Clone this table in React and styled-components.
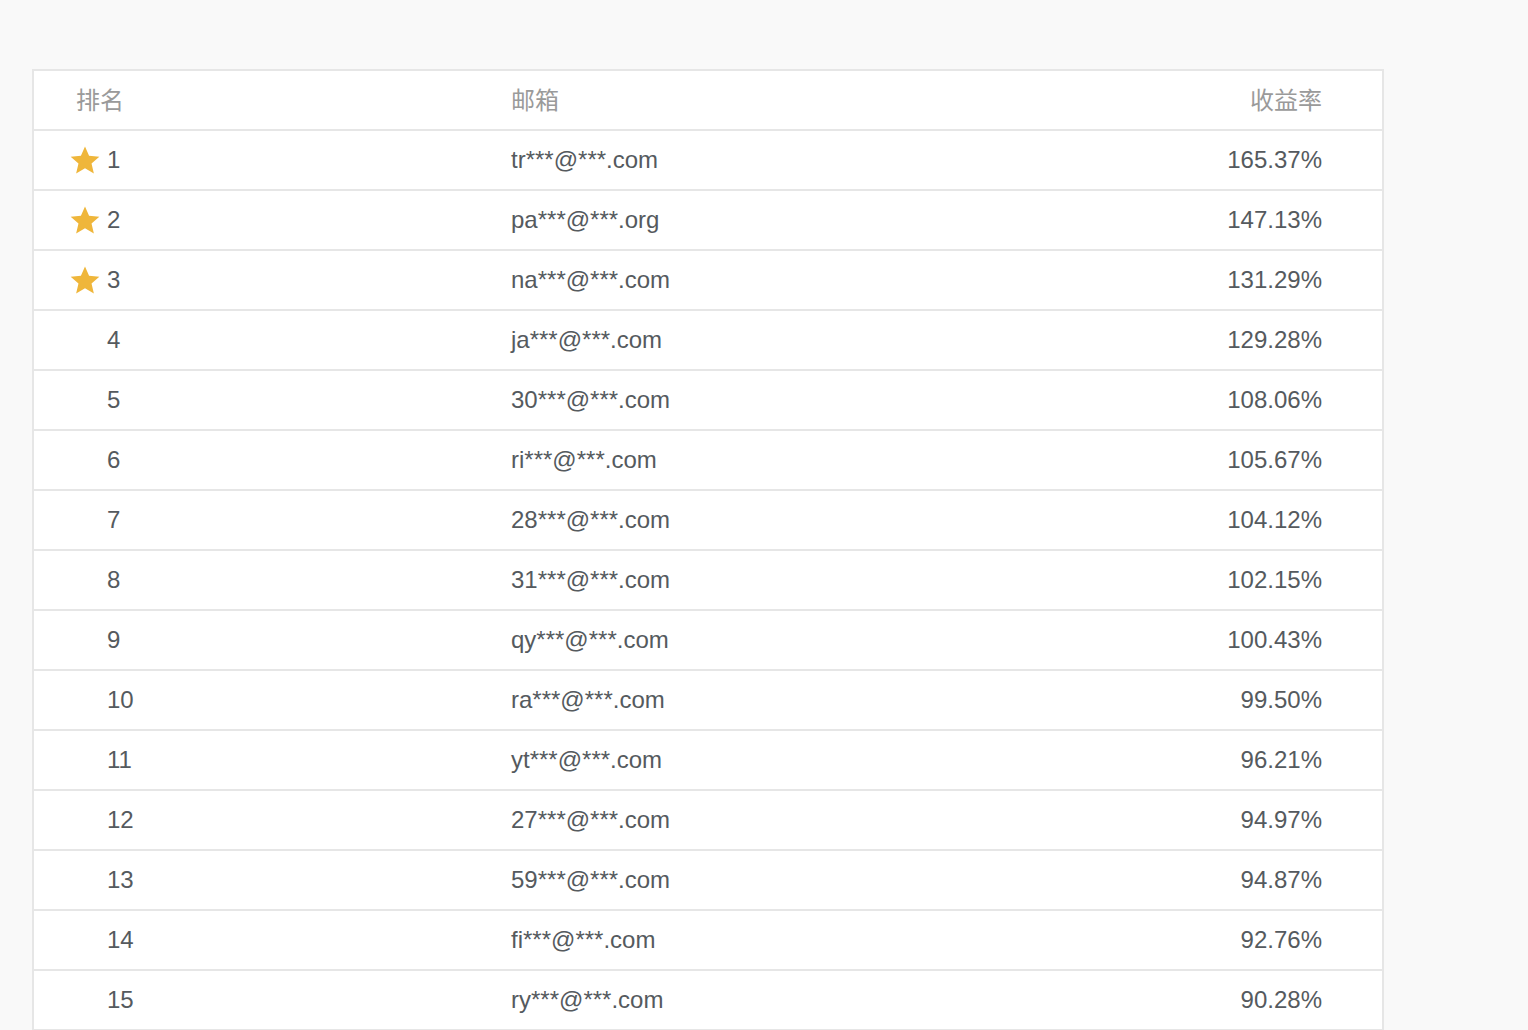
import React from 'react';
import styled, { createGlobalStyle } from 'styled-components';

const rows = [
  { rank: 1, email: 'tr***@***.com', rate: '165.37%' },
  { rank: 2, email: 'pa***@***.org', rate: '147.13%' },
  { rank: 3, email: 'na***@***.com', rate: '131.29%' },
  { rank: 4, email: 'ja***@***.com', rate: '129.28%' },
  { rank: 5, email: '30***@***.com', rate: '108.06%' },
  { rank: 6, email: 'ri***@***.com', rate: '105.67%' },
  { rank: 7, email: '28***@***.com', rate: '104.12%' },
  { rank: 8, email: '31***@***.com', rate: '102.15%' },
  { rank: 9, email: 'qy***@***.com', rate: '100.43%' },
  { rank: 10, email: 'ra***@***.com', rate: '99.50%' },
  { rank: 11, email: 'yt***@***.com', rate: '96.21%' },
  { rank: 12, email: '27***@***.com', rate: '94.97%' },
  { rank: 13, email: '59***@***.com', rate: '94.87%' },
  { rank: 14, email: 'fi***@***.com', rate: '92.76%' },
  { rank: 15, email: 'ry***@***.com', rate: '90.28%' },
];

const Star = () => (
  <svg width="32" height="32" viewBox="0 0 24 24">
    <path
      d="M12 1.8l3.05 7.1 7.7.65-5.85 5.05 1.75 7.55L12 18.15 5.35 22.15l1.75-7.55L1.25 9.55l7.7-.65z"
      fill="#efb63b"
    />
  </svg>
);

class App extends React.Component {
  renderRows() {
    return rows.map((row) => (
      <Row key={row.rank}>
        <RankCell>
          <StarSlot>{row.rank <= 3 ? <Star /> : null}</StarSlot>
          <span>{row.rank}</span>
        </RankCell>
        <div>{row.email}</div>
        <RateCell>{row.rate}</RateCell>
      </Row>
    ));
  }

  render() {
    return (
      <Page>
        <GlobalStyle />
        <Table>
          <Row header>
            <div>排名</div>
            <div>邮箱</div>
            <RateCell>收益率</RateCell>
          </Row>
          {this.renderRows()}
        </Table>
      </Page>
    );
  }
}

const GlobalStyle = createGlobalStyle`
  html, body {
    margin: 0;
    padding: 0;
    background: #f9f9f9;
  }
  body {
    font-family: "Liberation Sans", "Noto Sans CJK SC", Arial, sans-serif;
  }
`;

const Page = styled.div`
  padding: 69px 0 0 32px;
  min-height: 100vh;
  box-sizing: border-box;
`;

const Table = styled.div`
  width: 1352px;
  background: #ffffff;
  border: 2px solid #e6e6e6;
  border-bottom: none;
  box-sizing: border-box;
`;

const Row = styled.div`
  display: grid;
  grid-template-columns: 435px 1fr auto;
  align-items: center;
  height: 58px;
  box-sizing: border-box;
  padding: 0 60px ${(p) => (p.header ? '4px' : '0')} 42px;
  border-bottom: 2px solid #e6e6e6;
  font-size: 24px;
  color: ${(p) => (p.header ? '#9a9a9a' : '#555a5e')};
  height: 60px;
`;

const RankCell = styled.div`
  display: flex;
  align-items: center;
  margin-left: -8px;
`;

const StarSlot = styled.div`
  width: 39px;
  height: 30px;
  display: flex;
  align-items: center;
  margin-left: 1px;
  margin-right: -1px;
`;

const RateCell = styled.div`
  text-align: right;
`;

export default App;
